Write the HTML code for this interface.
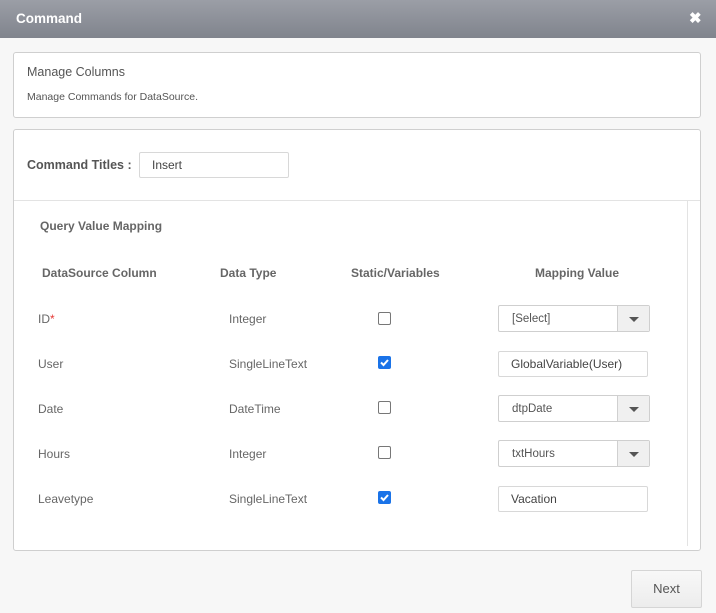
<!DOCTYPE html>
<html><head><style>
*{box-sizing:border-box;margin:0;padding:0}
body{width:716px;height:613px;background:#f7f7f7;font-family:"Liberation Sans",sans-serif;position:relative;overflow:hidden;color:#555}
.a{position:absolute}
.hdr{left:0;top:0;width:716px;height:38px;background:linear-gradient(#9b9ea6,#80848d)}
.box{background:#fff;border:1px solid #cfcfcf;border-radius:3px}
.t{font-size:12px;color:#666;white-space:nowrap}
.h{font-size:12px;font-weight:bold;color:#666;white-space:nowrap}
.cb{width:13px;height:13px;border:1px solid #777;border-radius:2px;background:#fff}
.cc{width:13px;height:13px;border-radius:2px;background:#1a73e8}
.inp{border:1px solid #d8d8d8;border-radius:2px;background:#fff;font-size:12px;color:#444;padding-left:12px;line-height:24px}
.sel{border:1px solid #cfcfcf;border-radius:2px;background:#fff;font-size:11.5px;color:#555;width:152px;height:27px;line-height:25px;padding-left:13px;padding-top:1px}
.sel b{position:absolute;right:0;top:0;width:32px;height:25px;background:#f0f0f0;border-left:1px solid #d0d0d0}
.sel b:after{content:"";position:absolute;left:11px;top:11px;border-left:5px solid transparent;border-right:5px solid transparent;border-top:5px solid #555}
</style></head><body>
<div class="a hdr"></div>
<div class="a" style="left:16px;top:11px;font-size:13.5px;font-weight:bold;color:#fff">Command</div>
<div class="a" style="left:689px;top:9px;font-size:15px;font-weight:bold;color:#fff">✖</div>
<div class="a box" style="left:13px;top:52px;width:688px;height:66px"></div>
<div class="a t" style="left:27px;top:65px;font-size:12.5px;color:#555">Manage Columns</div>
<div class="a t" style="left:27px;top:91px;font-size:10.5px;color:#555">Manage Commands for DataSource.</div>
<div class="a box" style="left:13px;top:129px;width:688px;height:422px"></div>
<div class="a t" style="left:27px;top:158px;font-size:12.5px;color:#555;font-weight:bold">Command Titles :</div>
<div class="a inp" style="left:139px;top:152px;width:150px;height:26px;line-height:24px">Insert</div>
<div class="a" style="left:14px;top:200px;width:686px;height:1px;background:#e3e3e3"></div>
<div class="a" style="left:687px;top:201px;width:1px;height:345px;background:#e3e3e3"></div>
<div class="a h" style="left:40px;top:219px">Query Value Mapping</div>
<div class="a h" style="left:42px;top:266px">DataSource Column</div>
<div class="a h" style="left:220px;top:266px">Data Type</div>
<div class="a h" style="left:351px;top:266px">Static/Variables</div>
<div class="a h" style="left:535px;top:266px">Mapping Value</div>

<div class="a t" style="left:38px;top:312px">ID<span style="color:#e53935">*</span></div>
<div class="a t" style="left:229px;top:312px">Integer</div>
<div class="a cb" style="left:378px;top:312px"></div>
<div class="a sel" style="left:498px;top:305px">[Select]<b></b></div>

<div class="a t" style="left:38px;top:357px">User</div>
<div class="a t" style="left:229px;top:357px">SingleLineText</div>
<div class="a cc" style="left:378px;top:356px"><svg width="13" height="13"><path d="M3 6.5l2.5 2.5 4.5-5" stroke="#fff" stroke-width="2" fill="none"/></svg></div>
<div class="a inp" style="left:498px;top:351px;width:150px;height:26px">GlobalVariable(User)</div>

<div class="a t" style="left:38px;top:402px">Date</div>
<div class="a t" style="left:229px;top:402px">DateTime</div>
<div class="a cb" style="left:378px;top:401px"></div>
<div class="a sel" style="left:498px;top:395px">dtpDate<b></b></div>

<div class="a t" style="left:38px;top:447px">Hours</div>
<div class="a t" style="left:229px;top:447px">Integer</div>
<div class="a cb" style="left:378px;top:446px"></div>
<div class="a sel" style="left:498px;top:440px">txtHours<b></b></div>

<div class="a t" style="left:38px;top:492px">Leavetype</div>
<div class="a t" style="left:229px;top:492px">SingleLineText</div>
<div class="a cc" style="left:378px;top:491px"><svg width="13" height="13"><path d="M3 6.5l2.5 2.5 4.5-5" stroke="#fff" stroke-width="2" fill="none"/></svg></div>
<div class="a inp" style="left:498px;top:486px;width:150px;height:26px">Vacation</div>

<div class="a" style="left:631px;top:570px;width:71px;height:38px;border:1px solid #d5d5d5;border-radius:2px;background:linear-gradient(#f8f8f8,#ececec);font-size:13px;color:#555;text-align:center;line-height:36px">Next</div>
</body></html>
